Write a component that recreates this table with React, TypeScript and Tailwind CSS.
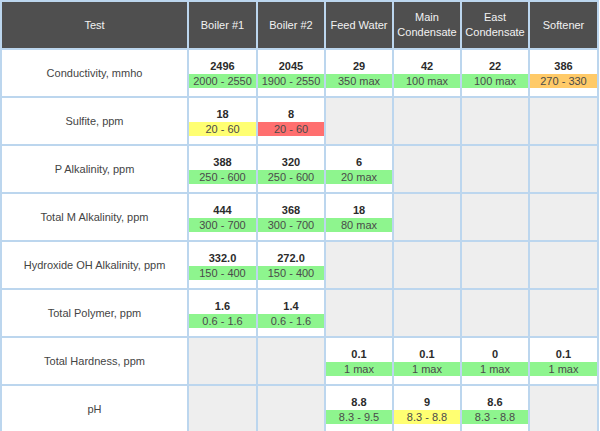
type Tone = 'g' | 'y' | 'r' | 'o';
type Reading = { value: string; range: string; tone?: Tone } | null;

const columns = ['Boiler #1', 'Boiler #2', 'Feed Water', 'Main Condensate', 'East Condensate', 'Softener'];

const rows: { test: string; cells: Reading[] }[] = [
  {
    test: 'Conductivity, mmho',
    cells: [
      { value: '2496', range: '2000 - 2550' },
      { value: '2045', range: '1900 - 2550' },
      { value: '29', range: '350 max' },
      { value: '42', range: '100 max' },
      { value: '22', range: '100 max' },
      { value: '386', range: '270 - 330', tone: 'o' },
    ],
  },
  {
    test: 'Sulfite, ppm',
    cells: [
      { value: '18', range: '20 - 60', tone: 'y' },
      { value: '8', range: '20 - 60', tone: 'r' },
      null,
      null,
      null,
      null,
    ],
  },
  {
    test: 'P Alkalinity, ppm',
    cells: [
      { value: '388', range: '250 - 600' },
      { value: '320', range: '250 - 600' },
      { value: '6', range: '20 max' },
      null,
      null,
      null,
    ],
  },
  {
    test: 'Total M Alkalinity, ppm',
    cells: [
      { value: '444', range: '300 - 700' },
      { value: '368', range: '300 - 700' },
      { value: '18', range: '80 max' },
      null,
      null,
      null,
    ],
  },
  {
    test: 'Hydroxide OH Alkalinity, ppm',
    cells: [
      { value: '332.0', range: '150 - 400' },
      { value: '272.0', range: '150 - 400' },
      null,
      null,
      null,
      null,
    ],
  },
  {
    test: 'Total Polymer, ppm',
    cells: [
      { value: '1.6', range: '0.6 - 1.6' },
      { value: '1.4', range: '0.6 - 1.6' },
      null,
      null,
      null,
      null,
    ],
  },
  {
    test: 'Total Hardness, ppm',
    cells: [
      null,
      null,
      { value: '0.1', range: '1 max' },
      { value: '0.1', range: '1 max' },
      { value: '0', range: '1 max' },
      { value: '0.1', range: '1 max' },
    ],
  },
  {
    test: 'pH',
    cells: [
      null,
      null,
      { value: '8.8', range: '8.3 - 9.5' },
      { value: '9', range: '8.3 - 8.8', tone: 'y' },
      { value: '8.6', range: '8.3 - 8.8' },
      null,
    ],
  },
];

const toneClass: Record<Tone, string> = {
  g: 'bg-[#8ef58e]',
  y: 'bg-[#ffff72]',
  r: 'bg-[#ff6f6f]',
  o: 'bg-[#ffca68]',
};

function ReadingCell({ reading }: { reading: Reading }) {
  if (!reading) return <div className="bg-[#eeeeee]" />;
  return (
    <div className="bg-white pt-[9px] text-center">
      <div className="h-[15px] text-[11px] leading-[15px] font-bold text-[#2b2b2b]">{reading.value}</div>
      <div className={`h-[14px] text-[11px] leading-[14px] text-[#4a4a4a] ${toneClass[reading.tone ?? 'g']}`}>
        {reading.range}
      </div>
    </div>
  );
}

export default function App() {
  return (
    <div className="bg-white min-h-screen" style={{ fontFamily: '"Liberation Sans", Arial, sans-serif' }}>
      <div className="w-[599px] bg-[#bcd6ee] p-[2px] grid grid-cols-[185px_67px_66px_66px_66px_66px_67px] auto-rows-[46px] gap-[2px]">
        <div className="bg-[#4f4f4f] text-[#f2f2f2] text-[11px] leading-[15px] flex items-center justify-center text-center">
          Test
        </div>
        {columns.map((col) => (
          <div
            key={col}
            className="bg-[#4f4f4f] text-[#f2f2f2] text-[11px] leading-[15px] flex items-center justify-center text-center px-1"
          >
            {col}
          </div>
        ))}

        {rows.map((row) => (
          <div key={row.test} className="contents">
            <div className="bg-white text-[11px] text-[#444] flex items-center justify-center text-center">
              {row.test}
            </div>
            {row.cells.map((cell, i) => (
              <ReadingCell key={i} reading={cell} />
            ))}
          </div>
        ))}
      </div>
    </div>
  );
}
